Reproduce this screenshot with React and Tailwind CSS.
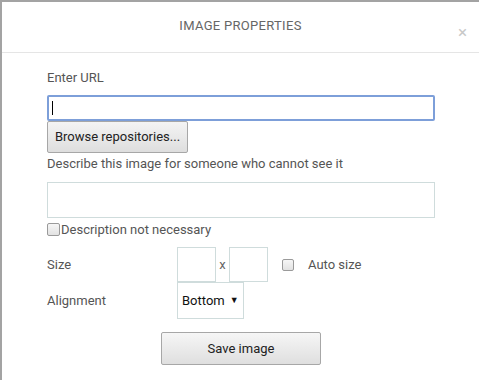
import React from "react";

const labelStyle = "text-[13px] text-[#555]";
const boxStyle = "border border-[#cfdcdc] bg-white";

const App = () => {
  return (
    <div className="w-[479px] h-[380px] bg-[#a3a3a3] pt-[2px] pl-[2px] font-['Roboto',sans-serif] overflow-hidden">
      <div className="w-[477px] h-[378px] bg-white flex flex-col">
        <div className="relative h-[51px] border-b border-[#e5e5e5] flex items-center justify-center">
          <span className="text-[13px] tracking-[0.3px] text-[#666] -mt-[2px]">IMAGE PROPERTIES</span>
          <span className="absolute right-[12px] top-[22px] text-[17px] leading-none text-[#c8c8c8]">×</span>
        </div>
        <div className="pl-[45px] pr-[44px] pt-[16px] flex flex-col">
          <div className={`${labelStyle} h-[17px] leading-[17px]`}>Enter URL</div>
          <div className="mt-[9px] h-[26px] border-2 border-[#7d9fd9] rounded-[2px] flex items-center pl-[3px]">
            <div className="w-[1px] h-[14px] bg-black" />
          </div>
          <div className="flex">
            <button className="w-[141px] h-[32px] border border-[#a7a7a7] bg-gradient-to-b from-[#f4f4f4] to-[#dedede] text-[13px] text-[#222] rounded-[2px]">
              Browse repositories...
            </button>
          </div>
          <div className={`${labelStyle} mt-[2px] h-[17px] leading-[17px]`}>
            Describe this image for someone who cannot see it
          </div>
          <div className={`${boxStyle} mt-[10px] h-[36px]`} />
          <div className="flex items-center mt-[4px] h-[15px]">
            <div className="w-[13px] h-[13px] border border-[#9a9a9a] rounded-[2px] bg-gradient-to-b from-[#f6f6f6] to-[#e2e2e2]" />
            <span className={`${labelStyle} ml-[1px] leading-[15px]`}>Description not necessary</span>
          </div>
          <div className="flex items-center mt-[10px] h-[35px]">
            <span className={`${labelStyle} w-[130px]`}>Size</span>
            <div className={`${boxStyle} w-[39px] h-[35px]`} />
            <span className="text-[13px] text-[#666] w-[13px] text-center">x</span>
            <div className={`${boxStyle} w-[39px] h-[35px]`} />
            <div className="ml-[14px] w-[12px] h-[12px] border border-[#9a9a9a] rounded-[2px] bg-gradient-to-b from-[#f6f6f6] to-[#e2e2e2]" />
            <span className={`${labelStyle} ml-[14px]`}>Auto size</span>
          </div>
          <div className="flex items-center h-[37px]">
            <span className={`${labelStyle} w-[130px]`}>Alignment</span>
            <div className={`${boxStyle} w-[67px] h-[37px] flex items-center pl-[4px] text-[13px] text-[#111]`}>
              Bottom
              <span className="ml-[5px] text-[9px]">▼</span>
            </div>
          </div>
          <div className="flex mt-[13px] pl-[114px]">
            <button className="w-[160px] h-[33px] border border-[#a7a7a7] bg-gradient-to-b from-[#f6f6f6] to-[#dfdfdf] text-[13px] text-[#222] rounded-[2px]">
              Save image
            </button>
          </div>
        </div>
      </div>
    </div>
  );
};

export default App;
